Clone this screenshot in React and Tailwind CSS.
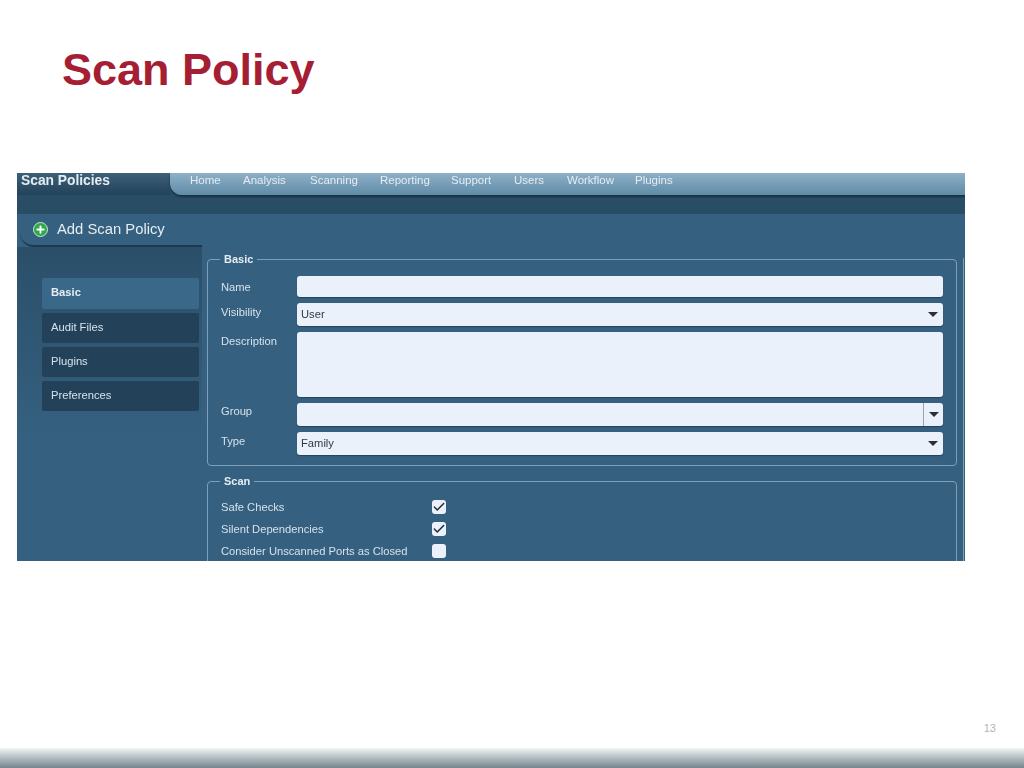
import { Plus, Check } from 'lucide-react';

const NAV = [
  ['Home', 'w-[53px]'],
  ['Analysis', 'w-[67px]'],
  ['Scanning', 'w-[70px]'],
  ['Reporting', 'w-[71px]'],
  ['Support', 'w-[63px]'],
  ['Users', 'w-[53px]'],
  ['Workflow', 'w-[68px]'],
  ['Plugins', 'w-[60px]'],
];

const SIDE = ['Audit Files', 'Plugins', 'Preferences'];

function Arrow() {
  return <span className="w-0 h-0 border-x-[5px] border-x-transparent border-t-[5px] border-t-[#2a2f38]" />;
}

function Field({ label, height = 'h-[22px]', labelTop = 'pt-[3px]', children }) {
  return (
    <div className="flex">
      <span className={`w-[76px] shrink-0 text-[11.2px] leading-[14px] text-[#d5e2ec] ${labelTop}`}>{label}</span>
      <div className={`flex-1 flex items-center justify-between bg-[#ebf1fb] rounded-[3px] pl-[4px] text-[11.2px] text-[#33383f] shadow-[0_1px_1px_rgba(20,40,60,0.5)] ${height}`}>
        {children}
      </div>
    </div>
  );
}

function CheckRow({ label, checked }) {
  return (
    <div className="flex items-center h-[22px]">
      <span className="w-[211px] shrink-0 text-[11.2px] text-[#d5e2ec]">{label}</span>
      <span className="w-[14px] h-[14px] rounded-[3px] bg-[#ebf1fb] flex items-center justify-center">
        {checked && <Check size={14} strokeWidth={2.5} className="text-[#22282f]" />}
      </span>
    </div>
  );
}

export default function App() {
  return (
    <div className="h-[768px] flex flex-col bg-white font-['Liberation_Sans',Arial,sans-serif] overflow-hidden">
      <h1 className="h-[173px] shrink-0 pl-[62px] pt-[43px] text-[45px] leading-[54px] font-bold text-[#a51e33]">Scan Policy</h1>

      <div className="ml-[17px] w-[948px] h-[388px] shrink-0 flex flex-col overflow-hidden bg-[#35607f] blur-[0.35px]">
        <div className="bg-[#2a4d66] shrink-0 h-[41px]">
          <div className="flex h-[22px]">
            <div className="w-[153px] shrink-0 pl-[4px] text-[13.8px] leading-[15px] font-bold text-[#e4edf3] bg-gradient-to-b from-[#3d6078] to-[#22425a]">Scan Policies</div>
            <div className="flex-1 flex items-start pl-[20px] rounded-bl-[12px] bg-gradient-to-b from-[#8fb0c8] to-[#5f8ba6] shadow-[0_2px_2px_#173246]">
              {NAV.map(([name, w]) => (
                <span key={name} className={`text-[11.5px] leading-[14px] text-[#e3edf4] ${w}`}>{name}</span>
              ))}
            </div>
          </div>
        </div>

        <div className="flex-1 flex min-h-0">
          <div className="w-[185px] shrink-0 flex flex-col">
            <div className="ml-[3px] h-[33px] shrink-0 flex items-center gap-[9px] pl-[13px] rounded-l-[14px] border-b-2 border-[#1d3a50] bg-[#35607f] text-[14.8px] text-[#e4edf3]">
              <span className="w-[15px] h-[15px] rounded-full bg-[#2fa84f] border border-[#c8e8cf] flex items-center justify-center">
                <Plus size={11} strokeWidth={4} className="text-white" />
              </span>
              Add Scan Policy
            </div>
            <div className="flex-1 pt-[31px] pl-[25px] pr-[3px] bg-gradient-to-b from-[#2b4f69] to-[#35607f] to-[60%]">
              <div className="flex flex-col gap-[4px]">
                <div className="h-[31px] flex items-center pl-[9px] pb-[2px] rounded-[2px] bg-[#3a6888] text-[11.2px] font-bold text-[#e4edf3]">Basic</div>
                {SIDE.map((item) => (
                  <div key={item} className="h-[30px] flex items-center pl-[9px] pb-[2px] rounded-[2px] bg-[#234259] text-[11.2px] text-[#d5e2ec]">{item}</div>
                ))}
              </div>
            </div>
          </div>

          <div className="flex-1 pl-[5px] min-w-0">
            <fieldset className="border border-[#7f9fb8] rounded-[4px] mt-[38px] px-[13px] pb-[10px]">
              <legend className="px-[4px] -ml-px text-[11px] font-bold leading-[14px] text-[#e4edf3]">Basic</legend>
              <div className="flex flex-col gap-[6px] pt-[10px]">
                <Field label="Name" height="h-[21px]" labelTop="pt-[4px]" />
                <Field label="Visibility" height="h-[23px]" labelTop="pt-[2px]">
                  User
                  <span className="mr-[5px] flex"><Arrow /></span>
                </Field>
                <Field label="Description" height="h-[65px]" labelTop="pt-[2px]" />
                <Field label="Group" labelTop="pt-[1px]" height="h-[23px]">
                  <span />
                  <span className="w-[20px] h-full border-l border-[#9aa5b0] flex items-center justify-center"><Arrow /></span>
                </Field>
                <Field label="Type" labelTop="pt-[2px]" height="h-[23px]">
                  Family
                  <span className="mr-[5px] flex"><Arrow /></span>
                </Field>
              </div>
            </fieldset>

            <fieldset className="border border-[#7f9fb8] rounded-[4px] mt-[8px] px-[13px] pb-[10px]">
              <legend className="px-[4px] -ml-px text-[11px] font-bold leading-[14px] text-[#e4edf3]">Scan</legend>
              <div className="flex flex-col pt-[8px]">
                <CheckRow label="Safe Checks" checked />
                <CheckRow label="Silent Dependencies" checked />
                <CheckRow label="Consider Unscanned Ports as Closed" />
              </div>
            </fieldset>
          </div>
          <div className="w-px shrink-0 ml-[6px] mr-px mt-[44px] bg-[#7f9fb8]" />
        </div>
      </div>

      <div className="flex-1 flex justify-end items-end pr-[28px] pb-[12px] text-[11px] text-[#b0b5b8]">13</div>
      <div className="h-[20px] shrink-0 bg-gradient-to-b from-[#f2f5f5] to-[#76878f]" />
    </div>
  );
}
